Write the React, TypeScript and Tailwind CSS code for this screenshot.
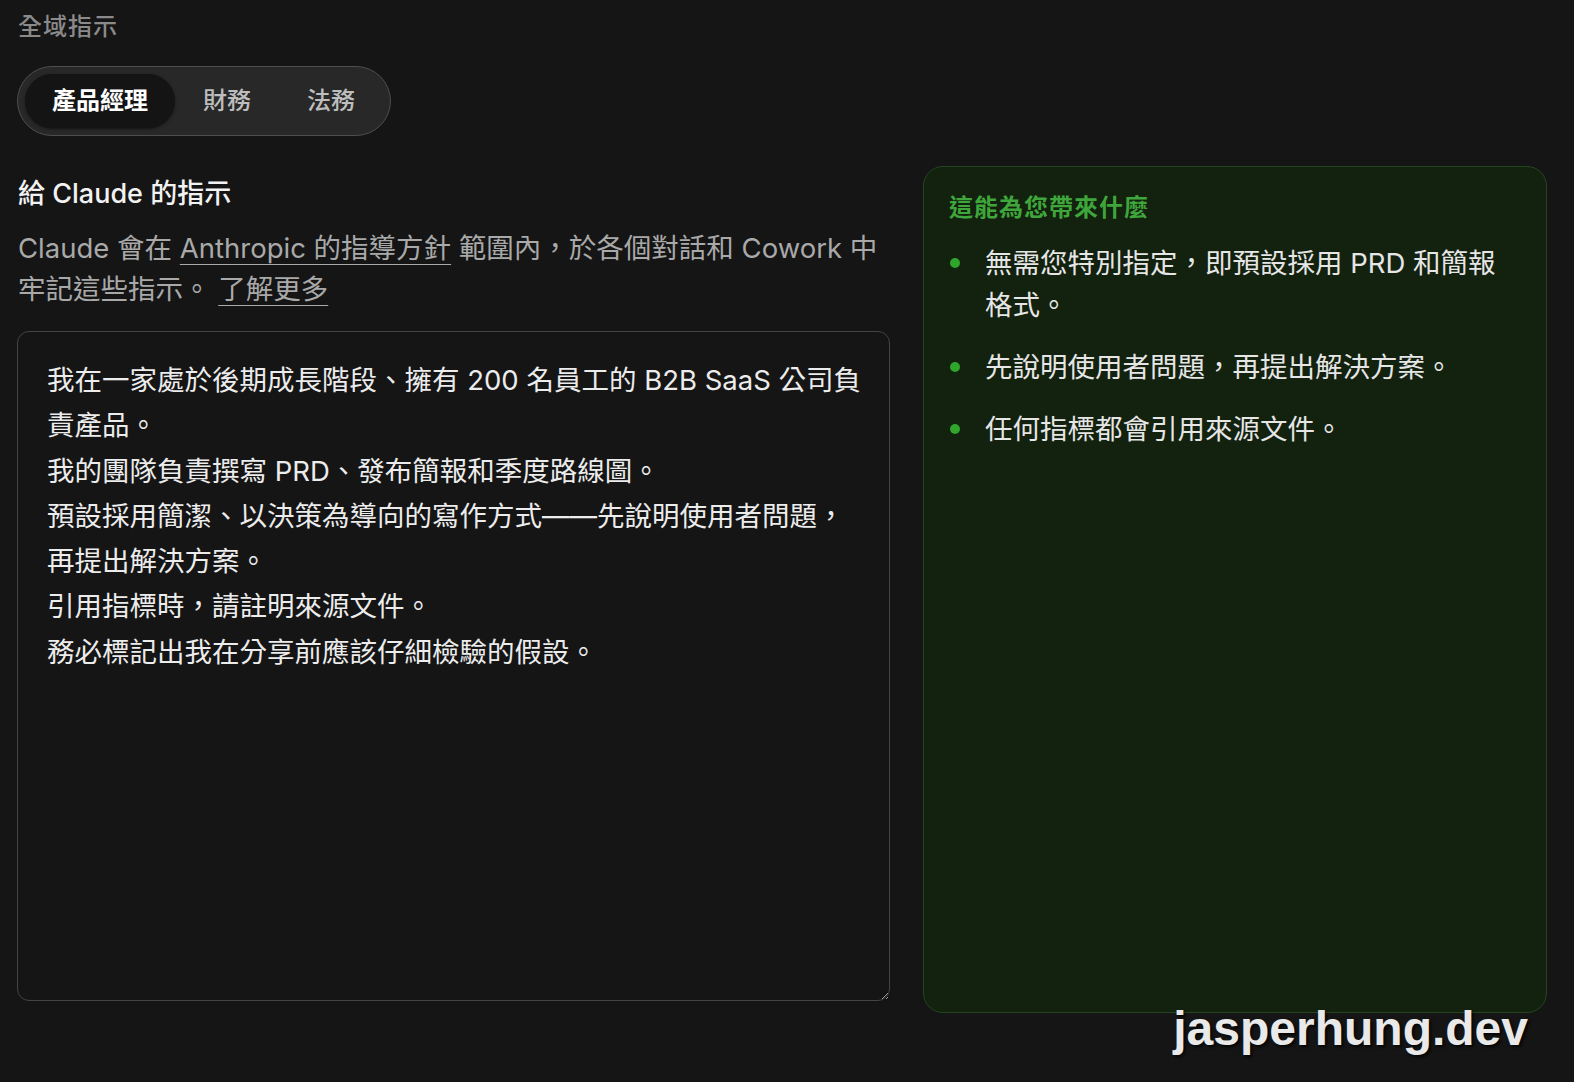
import { useState } from 'react';

const tabs = ['產品經理', '財務', '法務'];

const instructions = `我在一家處於後期成長階段、擁有 200 名員工的 B2B SaaS 公司負責產品。
我的團隊負責撰寫 PRD、發布簡報和季度路線圖。
預設採用簡潔、以決策為導向的寫作方式——先說明使用者問題，再提出解決方案。
引用指標時，請註明來源文件。
務必標記出我在分享前應該仔細檢驗的假設。`;

const benefits = [
  '無需您特別指定，即預設採用 PRD 和簡報格式。',
  '先說明使用者問題，再提出解決方案。',
  '任何指標都會引用來源文件。',
];

export default function App() {
  const [active, setActive] = useState(0);

  return (
    <div className="relative w-[1574px] h-[1082px] overflow-hidden bg-[#151515] px-[18px] pt-[12px] font-['Inter','Noto_Sans_CJK_TC',sans-serif] [color-scheme:dark]">
      {/* Section label */}
      <div className="text-[24px] leading-[30px] font-medium tracking-[1px] text-[#8a8a8a]">全域指示</div>

      {/* Role tabs */}
      <div className="mt-[24px] -ml-px inline-flex items-center h-[70px] rounded-full border border-[#4e4e4e] bg-[#282828] p-[7px]">
        {tabs.map((tab, i) => (
          <button
            key={tab}
            onClick={() => setActive(i)}
            className={
              i === active
                ? 'h-[54px] rounded-full bg-[#141414] px-[27px] text-[24px] font-semibold text-white shadow-[0_1px_3px_rgba(0,0,0,0.5)]'
                : 'h-[54px] rounded-full px-[28px] text-[24px] font-medium text-[#bdbdbd]'
            }
          >
            {tab}
          </button>
        ))}
      </div>

      <div className="mt-[30px] flex gap-[33px]">
        {/* Left: instructions */}
        <div className="w-[873px] -ml-px pt-[10px]">
          <h2 className="pl-px text-[27px] leading-[36px] font-medium text-[#f2f2f2]">給 Claude 的指示</h2>
          <p className="mt-[16px] pl-px text-[27.5px] leading-[41px] text-[#a9a9a9]">
            Claude 會在 <span className="underline underline-offset-[6px] decoration-1">Anthropic 的指導方針</span> 範圍內，於各個對話和 Cowork 中牢記這些指示。{' '}
            <span className="underline underline-offset-[6px] decoration-1">了解更多</span>
          </p>
          <textarea
            readOnly
            defaultValue={instructions}
            className="mt-[21px] block w-[873px] h-[670px] resize-y rounded-[12px] border border-[#444] bg-[#151515] pl-[29px] pr-[22px] pt-[26px] text-[27.5px] leading-[45.3px] text-[#ececec] outline-none font-['Inter','Noto_Sans_CJK_TC',sans-serif]"
          />
        </div>

        {/* Right: benefits card */}
        <div className="w-[624px] h-[847px] rounded-[20px] border border-[#23461f] bg-[#13210f] px-[25px] pt-[26px]">
          <div className="text-[24px] leading-[30px] font-semibold tracking-[1px] text-[#3ea63a]">這能為您帶來什麼</div>
          <ul className="mt-[19px] flex flex-col gap-[20px]">
            {benefits.map((b) => (
              <li key={b} className="flex items-start">
                <span className="mt-[16px] ml-[1px] h-[10px] w-[10px] shrink-0 rounded-full bg-[#2fa52b]" />
                <span className="ml-[25px] w-[530px] text-[27.5px] leading-[42px] text-[#e6e6e6]">{b}</span>
              </li>
            ))}
          </ul>
        </div>
      </div>

      {/* Watermark */}
      <div className="absolute right-[46px] top-[999px] text-[48px] leading-[60px] font-bold text-[#e9e9e9] font-['Liberation_Sans',sans-serif] [text-shadow:2px_2px_3px_rgba(0,0,0,0.8)]">
        jasperhung.dev
      </div>
    </div>
  );
}
